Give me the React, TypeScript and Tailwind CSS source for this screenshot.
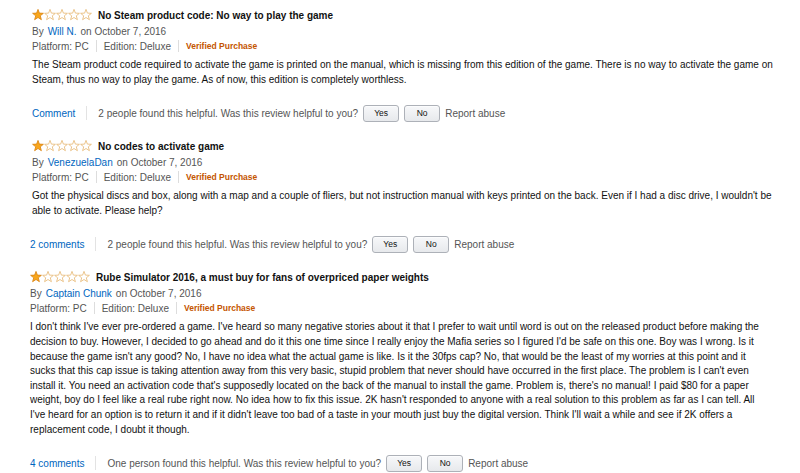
import React from 'react';

interface Review {
  title: string;
  author: string;
  lines: string[];
  comments: string;
  helpful: string;
  indent: string;
  footerIndent: string;
}

const reviews: Review[] = [
  {
    title: 'No Steam product code: No way to play the game',
    author: 'Will N.',
    lines: [
      'The Steam product code required to activate the game is printed on the manual, which is missing from this edition of the game. There is no way to activate the game on',
      'Steam, thus no way to play the game. As of now, this edition is completely worthless.',
    ],
    comments: 'Comment',
    helpful: '2 people found this helpful. Was this review helpful to you?',
    indent: 'pl-[32px]',
    footerIndent: 'pl-[32px]',
  },
  {
    title: 'No codes to activate game',
    author: 'VenezuelaDan',
    lines: [
      "Got the physical discs and box, along with a map and a couple of fliers, but not instruction manual with keys printed on the back. Even if I had a disc drive, I wouldn't be",
      'able to activate. Please help?',
    ],
    comments: '2 comments',
    helpful: '2 people found this helpful. Was this review helpful to you?',
    indent: 'pl-[32px]',
    footerIndent: 'pl-[30px]',
  },
  {
    title: 'Rube Simulator 2016, a must buy for fans of overpriced paper weights',
    author: 'Captain Chunk',
    lines: [
      "I don't think I've ever pre-ordered a game. I've heard so many negative stories about it that I prefer to wait until word is out on the released product before making the",
      "decision to buy. However, I decided to go ahead and do it this one time since I really enjoy the Mafia series so I figured I'd be safe on this one. Boy was I wrong. Is it",
      "because the game isn't any good? No, I have no idea what the actual game is like. Is it the 30fps cap? No, that would be the least of my worries at this point and it",
      "sucks that this cap issue is taking attention away from this very basic, stupid problem that never should have occurred in the first place. The problem is I can't even",
      "install it. You need an activation code that's supposedly located on the back of the manual to install the game. Problem is, there's no manual! I paid $80 for a paper",
      "weight, boy do I feel like a real rube right now. No idea how to fix this issue. 2K hasn't responded to anyone with a real solution to this problem as far as I can tell. All",
      "I've heard for an option is to return it and if it didn't leave too bad of a taste in your mouth just buy the digital version. Think I'll wait a while and see if 2K offers a",
      'replacement code, I doubt it though.',
    ],
    comments: '4 comments',
    helpful: 'One person found this helpful. Was this review helpful to you?',
    indent: 'pl-[30px]',
    footerIndent: 'pl-[30px]',
  },
];

const STAR = '6,0.4 7.4,4.1 11.4,4.3 8.3,6.8 9.4,10.7 6,8.5 2.6,10.7 3.7,6.8 0.6,4.3 4.6,4.1';

function Stars() {
  return (
    <div className="flex">
      {[0, 1, 2, 3, 4].map((i) => (
        <svg key={i} width="12" height="12" viewBox="0 0 12 12">
          {i === 0 ? (
            <polygon points={STAR} fill="#f8a61c" stroke="#d9820f" strokeWidth="0.8" strokeLinejoin="round" />
          ) : (
            <polygon points={STAR} fill="#fff" stroke="#e6b670" strokeWidth="0.8" strokeLinejoin="round" />
          )}
        </svg>
      ))}
    </div>
  );
}

function Sep({ h = 'h-[12px]' }: { h?: string }) {
  return <span className={`w-px ${h} bg-[#dddddd]`} />;
}

function VoteButton({ label }: { label: string }) {
  return (
    <button className="w-[36px] h-[17px] flex items-center justify-center rounded-[3px] border border-[#adb1b8] bg-gradient-to-b from-[#f7f8fa] to-[#e7e9ec] text-[8.5px] text-[#111] shadow-[0_1px_0_rgba(255,255,255,0.6)_inset]">
      {label}
    </button>
  );
}

function ReviewItem({ review }: { review: Review }) {
  return (
    <div className="mb-[16px]">
      <div className={review.indent}>
        {/* Title */}
        <div className="h-[16px] flex items-center">
          <Stars />
          <span className="ml-[6px] font-bold text-[10px] text-[#111]">{review.title}</span>
        </div>

        {/* Author */}
        <div className="h-[16px] flex items-center text-[10px] text-[#555]">
          <span>By</span>
          <span className="ml-[4px] text-[#0066c0]">{review.author}</span>
          <span className="ml-[4px]">on October 7, 2016</span>
        </div>

        {/* Format */}
        <div className="h-[14px] flex items-center text-[10px] text-[#555] gap-[7px]">
          <span>Platform: PC</span>
          <Sep />
          <span>Edition: Deluxe</span>
          <Sep />
          <span className="font-bold text-[8.5px] text-[#c45500]">Verified Purchase</span>
        </div>

        {/* Body */}
        <div className="mt-[5px] text-[10px] leading-[14.6px] text-[#111] whitespace-nowrap">
          {review.lines.map((line, i) => (
            <div key={i}>{line}</div>
          ))}
        </div>
      </div>

      {/* Footer */}
      <div className={`mt-[17px] h-[18px] flex items-center text-[10px] text-[#555] ${review.footerIndent}`}>
        <span className="text-[#0066c0]">{review.comments}</span>
        <span className="mx-[11px] w-px h-[14px] bg-[#e3e3e3]" />
        <span>{review.helpful}</span>
        <div className="ml-[5px] flex gap-[5px]">
          <VoteButton label="Yes" />
          <VoteButton label="No" />
        </div>
        <span className="ml-[5px]">Report abuse</span>
      </div>
    </div>
  );
}

export default function App() {
  return (
    <div className="w-[800px] h-[473px] overflow-hidden bg-white pt-[7px] font-['Liberation_Sans',Arial,sans-serif]">
      {reviews.map((r) => (
        <ReviewItem key={r.author} review={r} />
      ))}
    </div>
  );
}
